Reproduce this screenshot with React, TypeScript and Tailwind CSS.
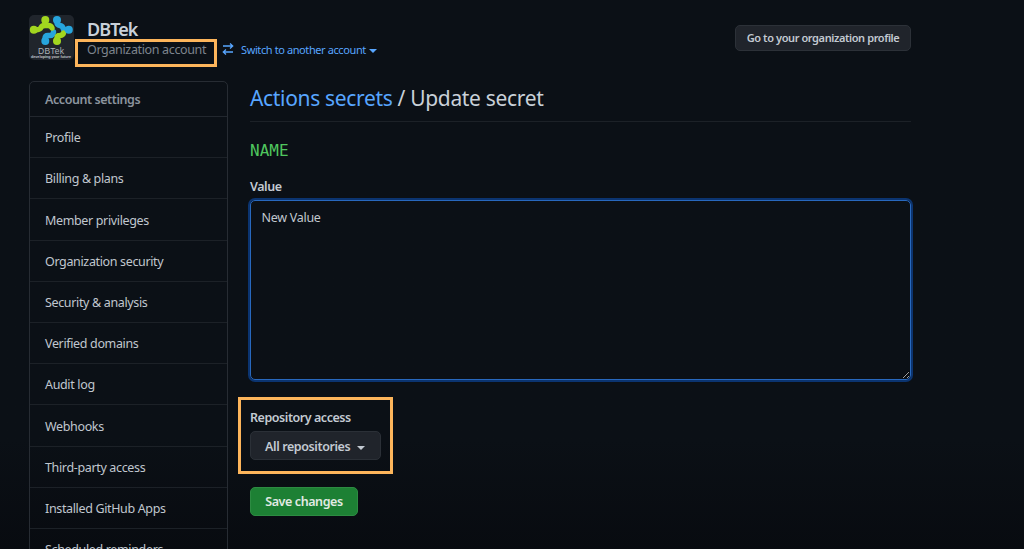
import React, { FC, ReactNode } from 'react';

const menuItems: string[] = [
  'Profile',
  'Billing & plans',
  'Member privileges',
  'Organization security',
  'Security & analysis',
  'Verified domains',
  'Audit log',
  'Webhooks',
  'Third-party access',
  'Installed GitHub Apps',
  'Scheduled reminders',
];

const OrgLogo: FC = () => (
  <svg className="h-[45px] w-[45px] shrink-0" viewBox="0 0 45 45">
    <rect width="45" height="45" rx="5" fill="#20252c" />
    <g strokeWidth="5.4" strokeLinecap="round" strokeLinejoin="round" fill="none">
      <path d="M28 5V7.5Q28 10 31 10.5Q34 11 34.5 14.7H40" stroke="#27a5dd" />
      <path d="M16 26V23.5Q16 20.5 19 20.5H21Q24 20.5 24.5 17" stroke="#27a5dd" />
      <path d="M4.5 14.7H8Q11 14.7 12 12.5Q13 10.5 16 10.5H19Q22 10.5 23 13" stroke="#a2d61f" />
      <path d="M16 5V10" stroke="#a2d61f" />
      <path d="M28 26V23Q28 20.5 31 20.5Q34 20 34.5 18" stroke="#a2d61f" />
    </g>
    <g fill="#a2d61f">
      <circle cx="16.3" cy="4.9" r="4" />
      <circle cx="4.8" cy="14.7" r="4" />
      <circle cx="28" cy="26" r="4" />
    </g>
    <g fill="#27a5dd">
      <circle cx="28" cy="4.9" r="4" />
      <circle cx="39.8" cy="14.7" r="4" />
      <circle cx="16.3" cy="26" r="4" />
    </g>
    <text x="22" y="38.5" textAnchor="middle" textLength="26" fontSize="8.5" fontFamily="Liberation Sans, sans-serif" fill="#aeb4ba">
      DBTek
    </text>
    <text x="22" y="42.9" textAnchor="middle" textLength="40" lengthAdjust="spacingAndGlyphs" fontSize="4.4" fontWeight="bold" fontFamily="Liberation Sans, sans-serif" fill="#c3c8cd">
      developing your future
    </text>
  </svg>
);

const SwitchIcon: FC = () => (
  <svg className="-mt-[2px] h-3 w-3" viewBox="0 0 12 12" fill="none" stroke="#58a6ff" strokeWidth="1.3">
    <path d="M1 3H10.5M8 0.5L10.7 3L8 5.5M11 9H1.5M4 6.5L1.3 9L4 11.5" />
  </svg>
);

const Caret: FC = () => (
  <span className="mt-[2px] inline-block border-x-[4px] border-t-[4px] border-x-transparent border-t-current" />
);

interface HighlightProps {
  className: string;
}

const Highlight: FC<HighlightProps> = ({ className }) => (
  <div className={`pointer-events-none absolute border-3 border-[#fdb55b] ${className}`} />
);

interface FieldLabelProps {
  children: ReactNode;
}

const FieldLabel: FC<FieldLabelProps> = ({ children }) => (
  <div className="text-[12.5px] leading-5 font-semibold tracking-[-0.45px] whitespace-nowrap text-[#c3cad2]">
    {children}
  </div>
);

const Header: FC = () => (
  <header className="flex h-[66px] w-[882px] items-start pt-[15px]">
    <OrgLogo />
    <div className="ml-[13px] pt-[3px]">
      <h1 className="text-[18px] leading-[22px] font-semibold tracking-[-0.95px] text-[#c9d1d9]">
        DBTek
      </h1>
      <div className="flex items-center">
        <div className="relative w-[135px] text-[12.5px] leading-[19px] tracking-[-0.35px] whitespace-nowrap text-[#7d848d]">
          Organization account
          <Highlight className="-top-[1px] -left-3 h-[28px] w-[142px]" />
        </div>
        <SwitchIcon />
        <a className="ml-[7px] flex items-center gap-[3px] text-[11px] leading-[19px] tracking-[-0.4px] whitespace-nowrap text-[#58a6ff]">
          Switch to another account
          <Caret />
        </a>
      </div>
    </div>
    <button className="mt-[10px] ml-auto h-[26px] w-[176px] rounded-[5px] border border-[#2c3138] bg-[#20242b] text-[11px] font-semibold tracking-[-0.4px] whitespace-nowrap text-[#c3cad2]">
      Go to your organization profile
    </button>
  </header>
);

const Sidebar: FC = () => (
  <nav className="w-[199px] shrink-0 rounded-t-[5px] border border-[#272c33]">
    <div className="h-[35px] border-b border-[#22272e] pl-[15px] text-[12.5px] leading-[36px] font-semibold tracking-[-0.43px] text-[#8b949e]">
      Account settings
    </div>
    {menuItems.map((item) => (
      <a
        key={item}
        className="flex h-[41.2px] items-center border-b border-[#1c2127] pt-[3px] pl-[15px] text-[12.5px] tracking-[-0.35px] whitespace-nowrap text-[#c0c7cf]"
      >
        {item}
      </a>
    ))}
  </nav>
);

const SecretForm: FC = () => (
  <main className="ml-[22px] w-[661px]">
    <h2 className="h-[41px] border-b border-[#1c2127] text-[21px] leading-[34px] tracking-[-0.33px] whitespace-nowrap text-[#c9d1d9]">
      <a className="text-[#58a6ff]">Actions secrets</a> / Update secret
    </h2>
    <div className="mt-[18px] font-['DejaVu_Sans_Mono',monospace] text-base leading-[22px] text-[#4fc65e]">
      NAME
    </div>
    <div className="mt-[15px]">
      <FieldLabel>Value</FieldLabel>
    </div>
    <textarea
      className="mt-[3px] block h-[180px] w-[661px] resize rounded-[5px] border border-[#2868bd] px-[10.5px] py-[7px] text-[12.5px] leading-5 tracking-[-0.28px] text-[#c0c7cf] shadow-[0_0_0_2px_#0b3470] outline-none"
      defaultValue="New Value"
    />
    <div className="relative mt-[28px]">
      <FieldLabel>Repository access</FieldLabel>
      <button className="mt-[3px] flex h-[29px] w-[131px] items-center rounded-[5px] border border-[#2b3037] bg-[#20242b] pt-[3px] pl-[14px] text-[12.5px] font-semibold tracking-[-0.4px] whitespace-nowrap text-[#c3cad2]">
        <span className="mr-[7px]">All repositories</span>
        <Caret />
      </button>
      <Highlight className="-top-[11px] -left-3 h-[77px] w-[155px]" />
    </div>
    <button className="mt-[27px] h-[29px] w-[108px] rounded-[5px] border border-[#2d8b42] bg-[#1d8034] pt-[2px] text-[12.5px] font-semibold tracking-[-0.4px] whitespace-nowrap text-[#e2ebe4]">
      Save changes
    </button>
  </main>
);

const App: FC = () => (
  <div className="h-[549px] overflow-hidden bg-[#0b1016] bg-linear-to-b from-[#0b1016] from-80% to-[#080b10] pl-[29px] font-['Noto_Sans','Open_Sans',sans-serif] scheme-dark">
    <Header />
    <div className="mt-[15px] flex items-start">
      <Sidebar />
      <SecretForm />
    </div>
  </div>
);

export default App;
